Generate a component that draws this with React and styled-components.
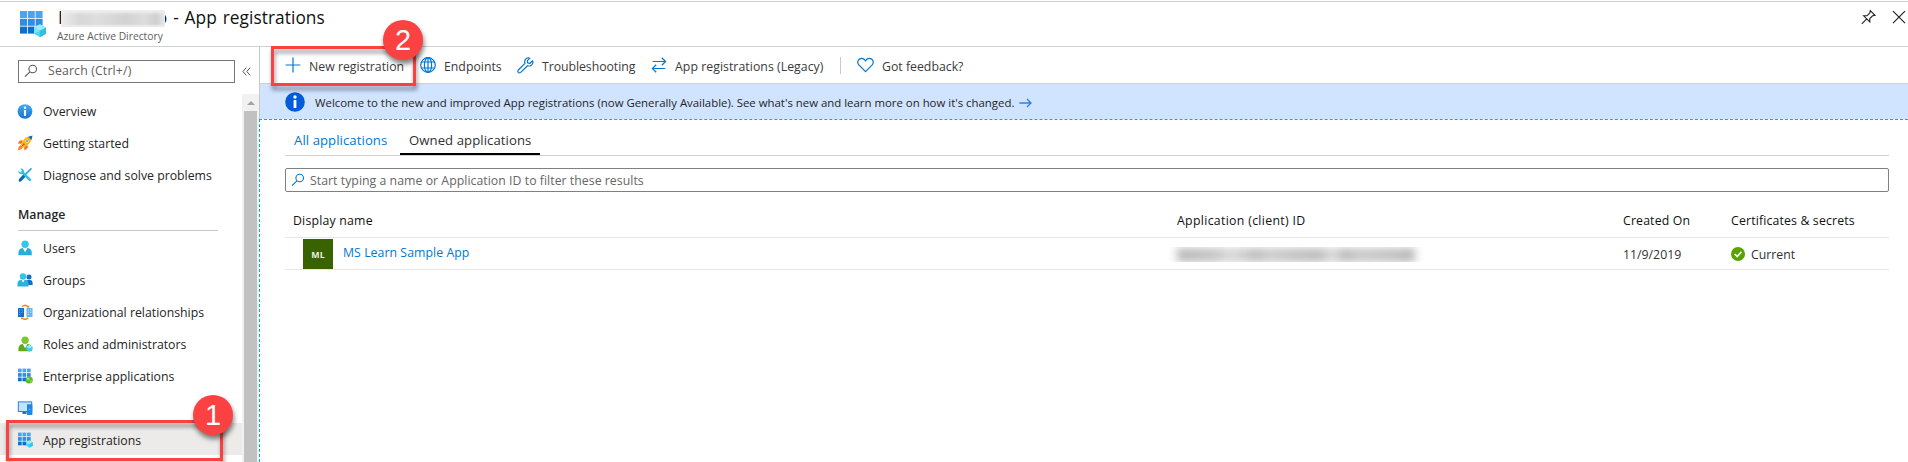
import React from 'react';
import styled, { createGlobalStyle, css } from 'styled-components';

const GlobalStyle = createGlobalStyle`
  * { box-sizing: border-box; }
  body {
    margin: 0;
    background: #fff;
    color: #252525;
    font: 12.3px/16px "Open Sans", "Noto Sans", sans-serif;
    overflow: hidden;
  }
`;

const Page = styled.div`
  position: relative;
  display: flex;
  flex-direction: column;
  height: 462px;
  padding-top: 1px;
  overflow: hidden;
`;

const Text = styled.span`
  white-space: nowrap;
  letter-spacing: ${(p) => p.$ls || 0}px;
`;

/* Header */
const Header = styled.header`
  display: flex;
  flex: none;
  height: 46px;
  border-top: 1px solid #ccc;
  border-bottom: 1px solid #d2d2d2;
  padding: 0 2px 0 18px;
`;
const HeaderIcon = styled.div`
  display: flex;
  padding-top: 8px;
  width: 39px;
`;
const Titles = styled.div`
  display: flex;
  flex-direction: column;
  flex: 1;
`;
const Title = styled.h1`
  display: flex;
  align-items: center;
  margin: 4px 0 0 1px;
  height: 24px;
  font-size: 17.3px;
  font-weight: 500;
  word-spacing: 1.3px;
  color: #111;
`;
const TenantBlur = styled.span`
  z-index: 1;
  width: 104px;
  height: 17px;
  margin: 0 -8px 0 -2px;
  background: linear-gradient(90deg, #ededed, #d7d7d7 18%, #dedede 35%, #d2d2d2 62%, #dcdcdc 80%, #d0d0d0 92%, #e8e8e8);
  box-shadow: inset 0 3px 3px #efefef, inset 0 -2px 2px #ececec;
`;
const Subtitle = styled.div`
  margin-top: -1px;
  font-size: 10.3px;
  line-height: 14px;
  color: #605e5c;
`;
const HeaderActions = styled.div`
  display: flex;
  gap: 16px;
  padding-top: 7px;
`;

/* Layout */
const Body = styled.div`
  display: flex;
  flex: 1;
  min-height: 0;
`;
const Sidebar = styled.aside`
  display: flex;
  flex-direction: column;
  flex: none;
  width: 259px;
`;
const SideSearchRow = styled.div`
  display: flex;
  align-items: center;
  flex: none;
  height: 47px;
  padding: 1px 0 0 18px;
  gap: 7px;
`;
const SideSearch = styled.div`
  display: flex;
  align-items: center;
  gap: 10px;
  width: 217px;
  height: 23px;
  padding-left: 5px;
  border: 1px solid #767676;
  color: #605e5c;
`;
const SideScroll = styled.div`
  display: flex;
  flex: 1;
  min-height: 0;
`;
const Menu = styled.nav`
  width: 242px;
  padding-top: 1px;
`;
const MenuItem = styled.div`
  display: flex;
  align-items: center;
  gap: 10px;
  height: 32px;
  padding: ${(p) => (p.$lowered ? 2 : 0)}px 0 0 17px;
  background: ${(p) => (p.$active ? '#edebe9' : 'transparent')};
  svg { flex: none; width: 16px; }
  span { padding-top: 2px; }
`;
const MenuHeading = styled.div`
  height: 40px;
  width: 200px;
  margin-left: 18px;
  padding-top: 16px;
  border-bottom: 1px solid #c8c8c8;
  font-weight: 600;
`;
const ScrollTrack = styled.div`
  display: flex;
  flex-direction: column;
  align-items: center;
  width: 17px;
  background: #f1f1f1;
`;
const ScrollArrow = styled.div`
  width: 0;
  height: 0;
  margin: 7px 0 6px;
  border: 4px solid transparent;
  border-top: 0;
  border-bottom: 4px solid #a3a3a3;
`;
const ScrollThumb = styled.div`
  flex: 1;
  width: 13px;
  background: #c1c1c1;
`;

/* Main */
const Main = styled.main`
  display: flex;
  flex-direction: column;
  flex: 1;
  min-width: 0;
`;
const Toolbar = styled.div`
  display: flex;
  align-items: center;
  height: 37px;
  padding-left: 25px;
  border-left: 1px solid #c8c8c8;
  border-bottom: 1px solid #d0d0d0;
  color: #3b3a39;
`;
const ToolItem = styled.div`
  display: flex;
  align-items: center;
  width: ${(p) => p.$w}px;
  gap: 8px;
  svg { flex: none; }
  span { padding-top: 3px; }
`;
const Separator = styled.div`
  width: 1px;
  height: 17px;
  margin-right: 16px;
  background: #c8c8c8;
`;
const Banner = styled.div`
  display: flex;
  align-items: center;
  height: 35px;
  padding: 1px 0 0 25px;
  border-left: 1px solid #c8c8c8;
  background: #d0e3ff;
  font-size: 11.4px;
  color: #252525;
`;
const BannerText = styled(Text)`
  margin: 0 5px 0 10px;
  padding-top: 1px;
`;
const BannerArrow = styled.svg`
  margin-top: 2px;
`;
const Content = styled.section`
  flex: 1;
  padding: 0 19px 0 25px;
  border-top: 1px dashed #00aee6;
  border-left: 1px dashed #00aee6;
`;
const Tabs = styled.div`
  display: flex;
  height: 36px;
  border-bottom: 1px solid #d0d0d0;
  font-size: 13.15px;
`;
const Tab = styled.div`
  display: flex;
  align-items: center;
  padding-left: 9px;
  width: ${(p) => p.$w}px;
  height: 35px;
  padding-top: ${(p) => (p.$active ? 7 : 5)}px;
  color: ${(p) => (p.$active ? '#323130' : '#0078d4')};
  ${(p) => p.$active && css`border-bottom: 2px solid #000;`}
`;
const Filter = styled.div`
  display: flex;
  align-items: center;
  gap: 5px;
  height: 24px;
  margin-top: 12px;
  padding-left: 5px;
  border: 1px solid #808080;
  border-radius: 2px;
  color: #666;
  span { padding-top: 2px; }
`;
const Row = styled.div`
  display: grid;
  grid-template-columns: 884px 446px 108px 1fr;
  align-items: center;
  height: ${(p) => (p.$head ? 46 : 32)}px;
  padding: ${(p) => (p.$head ? '12px 0 0 8px' : '0 0 0 8px')};
  border-bottom: 1px solid #e6e6e6;
  font-weight: ${(p) => (p.$head ? 500 : 400)};
  color: ${(p) => (p.$head ? '#111' : '#323130')};
`;
const CellText = styled(Text)`
  padding-top: 3px;
`;
const NameCell = styled.div`
  display: flex;
  align-items: center;
  gap: 10px;
  padding-left: 10px;
  color: #0078d4;
`;
const AppLink = styled(Text)`
  margin-top: -1px;
`;
const Avatar = styled.div`
  width: 30px;
  height: 30px;
  margin-top: 1px;
  background: #386300;
  color: #e8efe0;
  font-size: 8.8px;
  font-weight: 700;
  line-height: 32px;
  text-align: center;
`;
const HiddenId = styled.div`
  width: 258px;
  height: 15px;
  margin: 2px 0 0 -10px;
  overflow: hidden;
`;
const BlurredBars = styled.div`
  height: 14px;
  margin: 1px 10px 0;
  background: linear-gradient(90deg, #b8b8b8, #c6c6c6 17%, #d8d8d8 21%, #d0d0d0 27%, #bcbcbc 33%, #ccc 39%, #c2c2c2 50%, #bcbcbc 60%, #dcdcdc 65%, #b8b8b8 71%, #cacaca 76%, #c2c2c2 90%, #b5b5b5);
  filter: blur(4px);
`;
const Status = styled.div`
  display: flex;
  align-items: center;
  gap: 6px;
`;

/* Callouts */
const Callout = styled.div`
  position: absolute;
  left: ${(p) => p.$x}px;
  top: ${(p) => p.$y}px;
  width: ${(p) => p.$w}px;
  height: ${(p) => p.$h}px;
  border: 3px solid #fb4141;
  filter: drop-shadow(1px 4px 2px rgba(0, 0, 0, 0.42));
`;
const CalloutBadge = styled.div`
  position: absolute;
  left: ${(p) => p.$x}px;
  top: ${(p) => p.$y}px;
  width: 40px;
  height: 40px;
  border-radius: 50%;
  background: #fb4141;
  box-shadow: 1px 4px 5px rgba(0, 0, 0, 0.5);
  color: #fff;
  font: 29px/41px "Liberation Sans", Arial, sans-serif;
  text-align: center;
`;

/* Icons */
const GRID_BLUES = ['#4aa5ee', '#2f8ee4', '#0d6fce'];
const AppGrid = ({ size = 16, badge }) => (
  <svg width={size} height={size} viewBox="0 0 16 16">
    {[0, 1, 2].map((r) =>
      [0, 1, 2].map((c) => (
        <rect key={`${r}${c}`} x={1 + c * 4.5} y={0.6 + r * 4.5} width="3.7" height="3.7" fill={GRID_BLUES[r]} />
      )),
    )}
    {badge === 'cube' && (
      <g>
        <path d="M12.4 8.5 15.8 10.3V13.8L12.4 15.8 9 13.8V10.3Z" fill="#5bd3ef" />
        <path d="M12.4 8.5 15.8 10.3 12.4 12.2 9 10.3Z" fill="#9cebff" />
        <path d="M12.4 12.2 15.8 10.3V13.8L12.4 15.8Z" fill="#32c4e6" />
      </g>
    )}
    {badge === 'globe' && (
      <g>
        <circle cx="12.2" cy="12" r="3.6" fill="#5fb52a" />
        <path d="M9.4 10.2Q12 8.6 12.6 10.4T10.5 12.3Z" fill="#a4e05a" />
        <path d="M12.8 12.4Q15 11 15.4 12.6T13 15Z" fill="#8bd03c" />
      </g>
    )}
  </svg>
);

const HeaderGrid = () => (
  <svg width="29" height="29" viewBox="0 0 29 29">
    {[0, 1, 2].map((r) =>
      [0, 1, 2].map((c) => (
        <rect key={`${r}${c}`} x={2 + c * 7.8} y={1 + r * 7.8} width="7" height="7" fill={GRID_BLUES[r]} />
      )),
    )}
    <path d="M22 14.2 28 17.5V23.7L22 27.2 16 23.7V17.5Z" fill="#50d2f0" />
    <path d="M22 14.2 28 17.5 22 20.8 16 17.5Z" fill="#9cebff" />
    <path d="M16 17.5 22 20.8 16 23.7Z" fill="#7de3fa" />
    <path d="M22 20.8 28 17.5V23.7L22 27.2Z" fill="#33bfe2" />
  </svg>
);

const InfoIcon = ({ size, color, top }) => (
  <svg width={size} height={size} viewBox="0 0 20 20">
    <defs>
      <linearGradient id={`info${size}`} x2="0" y2="1">
        <stop stopColor={top} />
        <stop offset="1" stopColor={color} />
      </linearGradient>
    </defs>
    <circle cx="10" cy="10" r="9.8" fill={`url(#info${size})`} />
    <circle cx="10" cy="5" r="1.7" fill="#fff" />
    <rect x="8.6" y="8" width="2.8" height="8" rx=".5" fill="#fff" />
  </svg>
);

const Rocket = () => (
  <svg width="16" height="16" viewBox="0 0 16 16">
    <path d="M5.5 5.2 2.8 5.5.8 8.6 4.6 8.8Z" fill="#f2701d" />
    <path d="M10.8 10.3 10.7 13 7.4 15.4 7.2 11.5Z" fill="#f2701d" />
    <path d="M.7 15.4 1.7 11.7 3.7 10 6 12.4 4.3 14.3Z" fill="#f78d1e" />
    <path d="M3.6 9.4Q6.5 3.2 11.6 1.6L14.5 4.5Q12.8 9.5 6.6 12.5Z" fill="#fcb415" />
    <path d="M11.2 1.7 15.6.5 14.4 4.9Z" fill="#0b6cbd" />
    <circle cx="10" cy="6" r="1.5" fill="#fff" />
    <circle cx="10" cy="6" r=".9" fill="#2d8fe0" />
    <path d="M6.8 8.2 8 9.4 4.8 11.8 4.2 11.2Z" fill="#e55a1c" />
  </svg>
);

const Tools = () => (
  <svg width="16" height="16" viewBox="0 0 16 16">
    <path d="M14.4 1.4 6.8 9" stroke="#1ba3d9" strokeWidth="1.5" />
    <path d="M7.2 8.8 3.2 13" stroke="#0a66b7" strokeWidth="3.2" strokeLinecap="round" />
    <path d="M5.5 5.4 12.9 12.8" stroke="#32bfe4" strokeWidth="2.6" strokeLinecap="round" />
    <path d="M1.2 3.4 3.5 5.4 5.1 4 3.2 1.6Q6.5 1 7 3.9T4 7Q1.2 6.5 1.2 3.4Z" fill="#32bfe4" />
  </svg>
);

const Person = ({ head, bodyFill, cube }) => (
  <svg width="16" height="16" viewBox="0 0 16 16">
    <circle cx="8.1" cy="4.2" r="3.7" fill={head} />
    <path d="M1.4 15.3V13Q1.5 8.4 5.6 8H10.6Q14.8 8.4 14.8 13V15.3Z" fill={bodyFill} />
    <path d="M5.8 8 8.1 12.2 10.4 8Z" fill="#fff" />
    {cube && (
      <g>
        <path d="M12.4 9 15.6 10.7V13.8L12.4 15.7 9.2 13.8V10.7Z" fill="#42cbea" />
        <path d="M12.4 9 15.6 10.7 12.4 12.3 9.2 10.7Z" fill="#a2edff" />
      </g>
    )}
  </svg>
);

const People = () => (
  <svg width="16" height="16" viewBox="0 0 16 16">
    <circle cx="12" cy="5" r="2.5" fill="#0f6fc9" />
    <path d="M8.5 13V10Q9 8 11 8H13Q15.5 8 15.6 11V13Z" fill="#0f6fc9" />
    <circle cx="6" cy="4.5" r="3.2" fill="#32c3e8" />
    <path d="M.5 14.4V12Q.6 8.2 4 8H8Q11.4 8.2 11.5 12V14.4Z" fill="#28b1dc" />
    <path d="M4.6 8 6 10.8 7.5 8Z" fill="#fff" />
  </svg>
);

const OrgIcon = () => (
  <svg width="16" height="16" viewBox="0 0 16 16">
    <rect x="1" y="4" width="6" height="9" fill="#0f6fc9" />
    <path d="M2.2 5.6h1v1h-1zM4.6 5.6h1v1h-1zM2.2 7.8h1v1h-1zM4.6 7.8h1v1h-1zM2.2 10h1v1h-1z" fill="#8cc8f5" />
    <rect x="9.5" y="4" width="6" height="9" fill="#65b5ee" />
    <path d="M10.8 5.6h1v1h-1zM13.2 5.6h1v1h-1zM10.8 7.8h1v1h-1zM13.2 7.8h1v1h-1zM10.8 10h1v1h-1z" fill="#e2f3ff" />
    <path d="M5 2.8Q8.2-.3 11.2 3M11.3 13.7Q8 16.8 5 14" fill="none" stroke="#f28a1c" strokeWidth="1.4" />
    <path d="M9.8 3.4h2.4V.9zM6.4 13.4H4v2.4z" fill="#f28a1c" />
  </svg>
);

const DevicesIcon = () => (
  <svg width="16" height="16" viewBox="0 0 16 16">
    <rect x=".8" y="1.4" width="14.4" height="10.6" fill="#2b83d6" />
    <rect x="1.8" y="2.4" width="12.4" height="8.6" fill="#bfe5ff" />
    <path d="M5.5 12h4v1.8h-4z" fill="#0f5fb0" />
    <rect x="10" y="4.2" width="5.4" height="10.8" rx=".4" fill="#2387e0" />
    <circle cx="12.7" cy="9.5" r=".8" fill="#69b7f5" />
  </svg>
);

const Search = ({ color, size = 14 }) => (
  <svg width={size} height={size} viewBox="0 0 14 14" fill="none" stroke={color} strokeWidth="1.1">
    <circle cx="8.7" cy="5" r="3.8" />
    <path d="M5.9 7.8 1 12.7" />
  </svg>
);

const line = { fill: 'none', stroke: '#0078d4', strokeWidth: 1.2 };

const Plus = () => (
  <svg width="16" height="16" viewBox="0 0 16 16" {...line}>
    <path d="M8 .6V15.4M.6 8H15.4" />
  </svg>
);
const Globe = () => (
  <svg width="16" height="16" viewBox="0 0 16 16" {...line}>
    <circle cx="8" cy="8" r="7.3" />
    <ellipse cx="8" cy="8" rx="3.6" ry="7.3" />
    <path d="M8 .7V15.3M1.6 5H14.4M1.6 11H14.4" />
  </svg>
);
const Wrench = () => (
  <svg width="17" height="17" viewBox="0 0 17 17" {...line}>
    <path d="M12.9 1.2Q9.8.2 8.3 2.6 7.3 4.3 8 6.3L1.3 13Q.4 14.3 1.3 15.4 2.5 16.4 3.7 15.4L10.5 8.7Q13 9.6 14.8 7.9 16.5 6.1 15.6 3.8L13 6.3 10.6 5.9 10.4 3.7Z" strokeLinejoin="round" />
  </svg>
);
const Swap = () => (
  <svg width="16" height="16" viewBox="0 0 16 16" {...line}>
    <path d="M1.7 4.5H14.6M10.8.8 14.6 4.5 10.8 8.2M14.3 11.5H1.4M5.2 7.8 1.4 11.5 5.2 15.2" />
  </svg>
);
const Heart = () => (
  <svg width="17" height="16" viewBox="0 0 17 16" {...line}>
    <path d="M8.5 14.6 1.8 7.9Q.1 5.8 1.2 3.4 2.5 1.2 4.9 1.3 7.2 1.5 8.5 3.8 9.8 1.5 12.1 1.3 14.5 1.2 15.8 3.4 16.9 5.8 15.2 7.9Z" />
  </svg>
);
const Arrow = () => (
  <BannerArrow width="13" height="10" viewBox="0 0 13 10" fill="none" stroke="#2b7ff0" strokeWidth="1.3">
    <path d="M.4 5H12M8 1 12 5 8 9" />
  </BannerArrow>
);
const Collapse = () => (
  <svg width="9" height="9" viewBox="0 0 9 9" fill="none" stroke="#555" strokeWidth="1">
    <path d="M4.3.6.9 4.5 4.3 8.4M8.2.6 4.8 4.5 8.2 8.4" />
  </svg>
);
const Pin = () => (
  <svg width="15" height="16" viewBox="0 0 15 16" fill="none" stroke="#222" strokeWidth="1.1">
    <path d="M9.3 1.6 14 6.3 11.6 6.8 8.8 9.6V12.9L2.7 6.8H6L8.8 4ZM5.7 9.9.8 14.8" />
  </svg>
);
const Close = () => (
  <svg width="14" height="16" viewBox="0 0 14 16" stroke="#222" strokeWidth="1.2">
    <path d="M1 2.2 13 14.2M13 2.2 1 14.2" />
  </svg>
);
const Check = () => (
  <svg width="14" height="14" viewBox="0 0 14 14" fill="none">
    <circle cx="7" cy="7" r="7" fill="#57a300" />
    <path d="M3.7 7 6.2 9.5 10.4 4.7" stroke="#fff" strokeWidth="1.7" />
  </svg>
);

const TOP_ITEMS = [
  { label: 'Overview', icon: <InfoIcon size={15} color="#1573d1" top="#42acf0" /> },
  { label: 'Getting started', icon: <Rocket /> },
  { label: 'Diagnose and solve problems', icon: <Tools /> },
];
const MANAGE_ITEMS = [
  { label: 'Users', icon: <Person head="#32c8ea" bodyFill="#27aeda" /> },
  { label: 'Groups', icon: <People /> },
  { label: 'Organizational relationships', icon: <OrgIcon /> },
  { label: 'Roles and administrators', icon: <Person head="#7cc92e" bodyFill="#5fa91c" cube /> },
  { label: 'Enterprise applications', icon: <AppGrid badge="globe" /> },
  { label: 'Devices', icon: <DevicesIcon /> },
  { label: 'App registrations', icon: <AppGrid badge="cube" />, active: true },
];

const MenuEntry = ({ item, lowered }) => (
  <MenuItem $active={item.active} $lowered={lowered}>
    {item.icon}
    <Text>{item.label}</Text>
  </MenuItem>
);

export default function App() {
  return (
    <Page>
      <GlobalStyle />
      <Header>
        <HeaderIcon><HeaderGrid /></HeaderIcon>
        <Titles>
          <Title>
            <Text>I</Text>
            <TenantBlur />
            <Text $ls={0.06}>o - App registrations</Text>
          </Title>
          <Subtitle>Azure Active Directory</Subtitle>
        </Titles>
        <HeaderActions><Pin /><Close /></HeaderActions>
      </Header>
      <Body>
        <Sidebar>
          <SideSearchRow>
            <SideSearch><Search color="#555" /><Text $ls={0.15}>Search (Ctrl+/)</Text></SideSearch>
            <Collapse />
          </SideSearchRow>
          <SideScroll>
            <Menu>
              {TOP_ITEMS.map((i) => <MenuEntry key={i.label} item={i} />)}
              <MenuHeading>Manage</MenuHeading>
              {MANAGE_ITEMS.map((i) => <MenuEntry key={i.label} item={i} lowered />)}
            </Menu>
            <ScrollTrack><ScrollArrow /><ScrollThumb /></ScrollTrack>
          </SideScroll>
        </Sidebar>
        <Main>
          <Toolbar>
            <ToolItem $w={135}><Plus /><Text>New registration</Text></ToolItem>
            <ToolItem $w={97}><Globe /><Text>Endpoints</Text></ToolItem>
            <ToolItem $w={134}><Wrench /><Text $ls={-0.06}>Troubleshooting</Text></ToolItem>
            <ToolItem $w={189}><Swap /><Text $ls={0.04}>App registrations (Legacy)</Text></ToolItem>
            <Separator />
            <ToolItem $w={120}><Heart /><Text>Got feedback?</Text></ToolItem>
          </Toolbar>
          <Banner>
            <InfoIcon size={20} color="#015cda" top="#015cda" />
            <BannerText>Welcome to the new and improved App registrations (now Generally Available). See what's new and learn more on how it's changed.</BannerText>
            <Arrow />
          </Banner>
          <Content>
            <Tabs>
              <Tab $w={115}><Text $ls={0.07}>All applications</Text></Tab>
              <Tab $w={140} $active><Text $ls={0.07}>Owned applications</Text></Tab>
            </Tabs>
            <Filter><Search color="#0078d4" /><Text $ls={0.03}>Start typing a name or Application ID to filter these results</Text></Filter>
            <Row $head>
              <Text $ls={0.2}>Display name</Text>
              <Text $ls={0.32}>Application (client) ID</Text>
              <Text $ls={0.15}>Created On</Text>
              <Text $ls={0.15}>Certificates &amp; secrets</Text>
            </Row>
            <Row>
              <NameCell><Avatar>ML</Avatar><AppLink $ls={0.05}>MS Learn Sample App</AppLink></NameCell>
              <HiddenId><BlurredBars /></HiddenId>
              <CellText>11/9/2019</CellText>
              <Status><Check /><CellText>Current</CellText></Status>
            </Row>
          </Content>
        </Main>
      </Body>
      <Callout $x={6} $y={420} $w={217} $h={41} />
      <CalloutBadge $x={193} $y={395}>1</CalloutBadge>
      <Callout $x={271} $y={46} $w={145} $h={40} />
      <CalloutBadge $x={383} $y={20}>2</CalloutBadge>
    </Page>
  );
}
